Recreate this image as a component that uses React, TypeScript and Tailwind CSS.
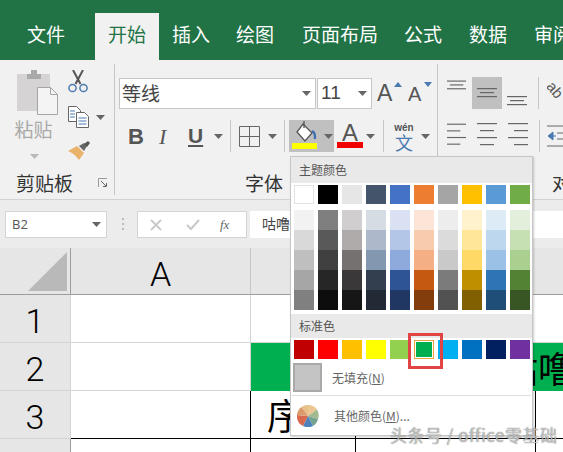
import React from "react";

const CJK = "font-['Noto_Sans_CJK_SC','Noto_Sans',sans-serif]";

const themeTop = ["#ffffff", "#000000", "#e7e6e6", "#44546a", "#4472c4", "#ed7d31", "#a5a5a5", "#ffc000", "#5b9bd5", "#70ad47"];
const shades = [
  ["#f2f2f2", "#d9d9d9", "#bfbfbf", "#a6a6a6", "#808080"],
  ["#7f7f7f", "#595959", "#404040", "#262626", "#0d0d0d"],
  ["#d0cece", "#afabab", "#767171", "#3a3838", "#171616"],
  ["#d6dce4", "#adb9ca", "#8497b0", "#333f4f", "#222b35"],
  ["#d9e1f2", "#b4c6e7", "#8ea9db", "#2f5496", "#203764"],
  ["#fce4d6", "#f8cbad", "#f4b084", "#c65911", "#833c0c"],
  ["#ededed", "#dbdbdb", "#c9c9c9", "#7b7b7b", "#525252"],
  ["#fff2cc", "#ffe699", "#ffd966", "#bf8f00", "#806000"],
  ["#ddebf7", "#bdd7ee", "#9bc2e6", "#2f75b5", "#1f4e78"],
  ["#e2efda", "#c6e0b4", "#a9d08e", "#548235", "#375623"],
];
const standard = ["#c00000", "#ff0000", "#ffc000", "#ffff00", "#92d050", "#00b050", "#00b0f0", "#0070c0", "#002060", "#7030a0"];

function Arrow({ className = "" }: { className?: string }) {
  return (
    <svg width="9" height="5" viewBox="0 0 9 5" className={className}>
      <path d="M0 0h9L4.500 5z" fill="#666" />
    </svg>
  );
}

function Lines({ rows }: { rows: [number, number][] }) {
  return (
    <svg width="20" height={rows.length * 7} viewBox={`0 0 20 ${rows.length * 7}`}>
      {rows.map(([a, b], i) => (
        <rect key={i} x={a} y={i * 7 + 1} width={b - a} height="1.200" fill="#666" />
      ))}
    </svg>
  );
}

function Sep() {
  return <div className="w-px h-[32px] bg-[#c6c6c6] shrink-0" />;
}

function Tab({ label, active, extra = "" }: { label: string; active?: boolean; extra?: string }) {
  return (
    <div
      className={`h-[47px] px-[13px] pt-[8px] text-[19px] leading-[26px] whitespace-nowrap shrink-0 ${extra} ${
        active ? "bg-[#f1f1f1] text-[#217346]" : "text-white"
      }`}
    >
      {label}
    </div>
  );
}

function PasteIcon() {
  return (
    <svg width="42" height="46" viewBox="0 0 42 46">
      <rect x="0" y="5" width="33" height="37" fill="#d6d3d5" />
      <path d="M10 5h4V1h6v4h4v5H10z" fill="#a9a9a9" />
      <path d="M20.500 18.500h13l7 7v20h-20z" fill="#f4f4f4" stroke="#a5a5a5" />
      <path d="M33.500 18.500v7h7" fill="none" stroke="#a5a5a5" />
    </svg>
  );
}

function ScissorsIcon() {
  return (
    <svg width="20" height="23" viewBox="0 0 20 23">
      <path d="M5 0l7.500 14M15 0L7.500 14" stroke="#555" strokeWidth="2" fill="none" />
      <circle cx="4.500" cy="18" r="3.600" fill="none" stroke="#4a7bb0" strokeWidth="1.500" />
      <circle cx="15.500" cy="18" r="3.600" fill="none" stroke="#4a7bb0" strokeWidth="1.500" />
    </svg>
  );
}

function CopyIcon() {
  return (
    <svg width="21" height="22" viewBox="0 0 21 22">
      <path d="M.5.500h8l4 4v11H.5z" fill="#fff" stroke="#666" />
      <path d="M8.500 6.500h8l4 4v11h-12z" fill="#fff" stroke="#666" />
      <path d="M2 5h5M2 8h5M2 11h5M10.500 12h8M10.500 15h8M10.500 18h8" stroke="#4a7bb0" />
    </svg>
  );
}

function BrushIcon() {
  return (
    <svg width="24" height="21" viewBox="0 0 24 21">
      <path d="M0 11l9-5 7 7-5 7c-3-4-6-7-11-9z" fill="#e9b36b" />
      <path d="M11 6l5-3 3 3-3 5z" fill="#666" />
      <path d="M16 4l4-3 2 2-3 4z" fill="#555" />
    </svg>
  );
}

function AlignGlyph({ y }: { y: number }) {
  return (
    <svg width="20" height="32" viewBox="0 0 20 32">
      <rect x="0" y={y} width="20" height="1.200" fill="#666" />
      <rect x="3" y={y + 4} width="14" height="1.200" fill="#666" />
      <rect x="0" y={y + 8} width="20" height="1.200" fill="#666" />
    </svg>
  );
}

function BucketIcon() {
  return (
    <svg width="26" height="30" viewBox="0 0 26 30">
      <path d="M11 3l9 9-7 8-8-9z" fill="#fff" stroke="#555" strokeWidth="1.300" />
      <path d="M12 0v7" stroke="#555" strokeWidth="1.300" />
      <path d="M20 10c3 1 3 4 3 8" stroke="#3f70b5" strokeWidth="2.200" fill="none" />
      <rect x="0" y="22" width="25" height="6" fill="#ffff00" />
    </svg>
  );
}

function PieIcon() {
  return (
    <svg width="22" height="22" viewBox="0 0 22 22">
      <path d="M11 11L4.500 2A11 11 0 0 1 11 0z" fill="#e9bf8a" />
      <path d="M11 11V0a11 11 0 0 1 9 4.500z" fill="#ecc794" />
      <path d="M11 11l9-6.500A11 11 0 0 1 21 14z" fill="#a3b98f" />
      <path d="M11 11l10 3a11 11 0 0 1-5 7z" fill="#76a38f" />
      <path d="M11 11l5 10a11 11 0 0 1-10 0z" fill="#4f81bd" />
      <path d="M11 11L6 21A11 11 0 0 1 0 10z" fill="#d8694f" />
      <path d="M11 11L0 10a11 11 0 0 1 4.500-8z" fill="#d99a6c" />
    </svg>
  );
}

function Swatch({ color, selected }: { color: string; selected?: boolean }) {
  return (
    <div
      className={`w-[20px] h-[19px] ${selected ? "border border-[#e8a33c] p-px bg-white" : color === "#ffffff" ? "border border-[#e2e2e2]" : ""}`}
    >
      <div className="w-full h-full" style={{ backgroundColor: color }} />
    </div>
  );
}

function ColorMenu() {
  return (
    <div className={`absolute left-[290px] top-[156px] w-[243px] h-[280px] bg-white border border-[#c6c6c6] shadow-[1px_1px_2px_rgba(0,0,0,0.2)] ${CJK}`}>
      <div className="h-[26px] bg-[#e9e9e9] pl-[8px] text-[12px] leading-[25px] text-[#555]">主题颜色</div>
      <div className="flex gap-[4px] pl-[3px] pt-[2px]">
        {themeTop.map((c) => (
          <Swatch key={c} color={c} />
        ))}
      </div>
      <div className="flex gap-[4px] pl-[3px] pt-[6px]">
        {shades.map((col, i) => (
          <div key={i} className="w-[20px] flex flex-col">
            {col.map((c) => (
              <div key={c} className="h-[20px] w-full" style={{ backgroundColor: c }} />
            ))}
          </div>
        ))}
      </div>
      <div className="mt-[4px] h-[24px] bg-[#e9e9e9] pl-[8px] text-[12px] leading-[24px] text-[#555]">标准色</div>
      <div className="flex gap-[4px] pl-[3px] pt-[2px]">
        {standard.map((c) => (
          <Swatch key={c} color={c} selected={c === "#00b050"} />
        ))}
      </div>
      <div className="flex items-center pl-[2px] pt-[3px] h-[34px]">
        <div className="w-[29px] h-[29px] bg-[#c4c4c4] border-2 border-[#a9a9a9] shrink-0" />
        <div className="ml-[10px] text-[12px] text-[#666]">
          无填充(<span className="underline">N</span>)
        </div>
      </div>
      <div className="mt-[2px] mx-[1px] h-px bg-[#dedede]" />
      <div className="flex items-center pl-[6px] h-[40px]">
        <PieIcon />
        <div className="ml-[15px] text-[12px] text-[#666]">
          其他颜色(<span className="underline">M</span>)...
        </div>
      </div>
    </div>
  );
}

function Ribbon() {
  return (
    <div className={`h-[139px] bg-[#f1f1f1] flex text-[#444] ${CJK}`}>
      {/* clipboard */}
      <div className="w-[115px] shrink-0 h-[131px] mt-[4px] border-r border-[#c6c6c6] flex flex-col">
        <div className="flex h-[107px]">
          <div className="w-[67px] shrink-0 flex flex-col items-center pl-[4px]">
            <div className="mt-[5px] ml-[4px]">
              <PasteIcon />
            </div>
            <div className="mt-[1px] text-[19px] leading-[26px] text-[#aaa] -ml-[4px]">粘贴</div>
            <Arrow className="mt-[12px] -ml-[2px] opacity-40" />
          </div>
          <div className="flex flex-col pl-[1px]">
            <div className="mt-[6px]">
              <ScissorsIcon />
            </div>
            <div className="mt-[13px] flex items-center">
              <CopyIcon />
              <Arrow className="ml-[7px]" />
            </div>
            <div className="mt-[12px]">
              <BrushIcon />
            </div>
          </div>
        </div>
        <div className="flex items-center pl-[16px] text-[19px] leading-[24px] text-[#333]">
          <span>剪贴板</span>
          <svg width="10" height="10" viewBox="0 0 10 10" className="ml-[25px]">
            <path d="M.5 9V.5H9" fill="none" stroke="#999" />
            <path d="M3 3l5 5M8.500 5v3.500H5" fill="none" stroke="#666" />
          </svg>
        </div>
      </div>

      {/* font */}
      <div className="w-[323px] shrink-0 h-[131px] mt-[4px] border-r border-[#c6c6c6] flex flex-col pl-[4px]">
        <div className="flex items-center mt-[13px] h-[32px]">
          <div className="w-[197px] h-[31px] bg-white border border-[#c6c6c6] flex items-center pl-[2px] pr-[4px] justify-between text-[19px] text-[#444]">
            <span>等线</span>
            <Arrow />
          </div>
          <div className="ml-px w-[55px] h-[31px] bg-white border border-[#c6c6c6] flex items-center pl-[3px] pr-[4px] justify-between text-[19px] text-[#444] font-['Liberation_Sans',sans-serif]">
            <span>11</span>
            <Arrow />
          </div>
          <div className="ml-[5px] relative w-[25px] h-[32px] text-[#555] text-[23px] font-['Liberation_Sans',sans-serif] leading-[32px]">
            A
            <svg width="8" height="5" viewBox="0 0 8 5" className="absolute right-0 top-[5px]">
              <path d="M0 5h8L4 0z" fill="#4a7bb0" />
            </svg>
          </div>
          <div className="ml-[6px] relative w-[24px] h-[32px] text-[#555] text-[20px] font-['Liberation_Sans',sans-serif] leading-[34px]">
            A
            <svg width="8" height="5" viewBox="0 0 8 5" className="absolute right-0 top-[5px]">
              <path d="M0 0h8L4 5z" fill="#4a7bb0" />
            </svg>
          </div>
        </div>
        <div className="flex items-center mt-[11px] h-[32px] font-['Liberation_Sans',sans-serif] text-[#555]">
          <div className="w-[35px] pl-[9px] text-[22px] font-bold">B</div>
          <div className="w-[30px] pl-[5px] text-[22px] italic font-['Liberation_Serif',serif]">I</div>
          <div className="w-[26px] pl-[4px] text-[21px] font-bold underline leading-[24px]">U</div>
          <Arrow className="ml-[4px] mr-[7px]" />
          <Sep />
          <svg width="21" height="21" viewBox="0 0 21 21" className="ml-[8px]">
            <path d="M.5.500h20v20H.5zM10.500.500v20M.5 10.500h20" fill="none" stroke="#666" />
          </svg>
          <Arrow className="ml-[8px] mr-[7px]" />
          <Sep />
          <div className="ml-[4px] w-[45px] h-[32px] bg-[#c0c0c0] flex items-center pl-[3px] shrink-0">
            <BucketIcon />
            <Arrow className="ml-[6px]" />
          </div>
          <div className="relative w-[26px] h-[32px] ml-[3px] text-[24px] leading-[26px] text-center">
            A
            <div className="absolute left-0 right-0 top-[22px] h-[6px] bg-[#f00000]" />
          </div>
          <Arrow className="ml-[3px] mr-[8px]" />
          <Sep />
          <div className={`ml-[9px] w-[22px] flex flex-col items-center ${CJK}`}>
            <span className="text-[10px] leading-[11px] font-['Liberation_Sans',sans-serif] font-bold text-[#555]">wén</span>
            <span className="text-[18px] leading-[18px] text-[#4a7bb0]">文</span>
          </div>
          <Arrow className="ml-[6px]" />
        </div>
        <div className="mt-[19px] pl-[126px] text-[19px] leading-[24px] text-[#333]">字体</div>
      </div>

      {/* alignment */}
      <div className="flex-1 flex flex-col pl-[9px] mt-[4px] min-w-0 overflow-hidden">
        <div className="flex items-center mt-[13px] h-[32px]">
          <AlignGlyph y={3} />
          <div className="ml-[6px] w-[31px] h-[32px] bg-[#c0c0c0] flex justify-center">
            <AlignGlyph y={11} />
          </div>
          <div className="ml-[5px]">
            <AlignGlyph y={19} />
          </div>
          <div className="ml-[11px]">
            <Sep />
          </div>
          <svg width="16" height="30" viewBox="0 0 16 30" className="ml-[8px] shrink-0">
            <text x="0" y="14" fontSize="15" fill="#555" transform="rotate(50 5 10)" fontFamily="Liberation Sans">ab</text>
          </svg>
        </div>
        <div className="flex items-center mt-[11px] h-[32px]">
          <Lines rows={[[0, 20], [0, 14], [0, 20], [0, 14]]} />
          <div className="ml-[11px]">
            <Lines rows={[[0, 20], [3, 17], [0, 20], [3, 17]]} />
          </div>
          <div className="ml-[11px]">
            <Lines rows={[[0, 20], [6, 20], [0, 20], [6, 20]]} />
          </div>
          <div className="ml-[11px]">
            <Sep />
          </div>
          <svg width="17" height="28" viewBox="0 0 17 28" className="ml-[6px] shrink-0">
            <path d="M7 10l-5 4 5 4zM3 14h7" fill="#4a7bb0" stroke="#4a7bb0" />
            <path d="M1 4h16M11 11h6M11 17h6M1 24h16" stroke="#666" />
          </svg>
        </div>
        <div className="mt-[19px] pl-[105px] text-[19px] leading-[24px] text-[#333] whitespace-nowrap">对齐</div>
      </div>
    </div>
  );
}

function FormulaBar() {
  return (
    <div className={`h-[49px] bg-[#ececec] border-t border-[#d2d2d2] flex items-start pt-[11px] pl-[5px] ${CJK}`}>
      <div className="w-[102px] h-[27px] bg-white border border-[#d4d4d4] flex items-center justify-between pl-[6px] pr-[5px] text-[13px] text-[#555] font-['Open_Sans',sans-serif] shrink-0">
        <span>B2</span>
        <Arrow />
      </div>
      <div className="ml-[15px] mt-[7px] flex flex-col gap-[3px] shrink-0">
        <div className="w-[2px] h-[2px] bg-[#bbb]" />
        <div className="w-[2px] h-[2px] bg-[#bbb]" />
        <div className="w-[2px] h-[2px] bg-[#bbb]" />
      </div>
      <div className="ml-[13px] w-[110px] h-[27px] bg-white border border-[#d4d4d4] flex items-center pl-[12px] shrink-0">
        <svg width="12" height="12" viewBox="0 0 12 12">
          <path d="M1 1l10 10M11 1L1 11" stroke="#c8c8c8" strokeWidth="1.800" />
        </svg>
        <svg width="14" height="12" viewBox="0 0 14 12" className="ml-[24px]">
          <path d="M1 6l4 4 8-9" stroke="#c8c8c8" strokeWidth="2" fill="none" />
        </svg>
        <span className="ml-[20px] text-[13px] italic font-['Liberation_Serif',serif] text-[#666]">fx</span>
      </div>
      <div className="ml-[3px] flex-1 h-[27px] bg-white pl-[12px] text-[14px] leading-[25px] text-[#444]">咕噜</div>
    </div>
  );
}

function Sheet() {
  const line = "border-b border-[#d4d4d4]";
  const head = "bg-[#e6e6e6] flex items-center justify-center text-[34px] font-['Roboto',sans-serif] font-light pt-[5px]";
  return (
    <div className={`grid grid-cols-[71px_180px_105px_180px_27px] grid-rows-[47px_48px_48px_48px_13px] text-black ${CJK}`}>
      <div className="bg-[#e6e6e6] border-r border-b border-[#9c9c9c] flex items-end justify-end pr-[3px] pb-[3px]">
        <div className="w-[39px] h-[39px] bg-[#b9b9b9] [clip-path:polygon(100%_0,100%_100%,0_100%)]" />
      </div>
      <div className={`${head} border-r border-b border-[#9c9c9c] border-r-[#c6c6c6] leading-none`}>A</div>
      <div className="col-span-3 bg-[#e6e6e6] border-b border-[#9c9c9c]" />

      <div className={`${head} border-r border-[#9c9c9c] ${line}`}>1</div>
      <div className={`border-r border-[#d4d4d4] ${line}`} />
      <div className={`col-span-3 ${line}`} />

      <div className={`${head} border-r border-[#9c9c9c] ${line}`}>2</div>
      <div className={`border-r border-[#d4d4d4] ${line}`} />
      <div className="col-span-3 bg-[#00b050] text-[36px] leading-[48px] overflow-hidden whitespace-nowrap pl-[251px]">咕噜</div>

      <div className={`${head} border-r border-[#9c9c9c] ${line}`}>3</div>
      <div className={`border-r border-black ${line}`} />
      <div className="border-b border-black border-r text-[36px] leading-[46px] pl-[16px]">序号</div>
      <div className="border-b border-black border-r" />
      <div className="border-b border-black" />

      <div className={`${head} border-r border-[#9c9c9c]`} />
      <div className="border-r border-black" />
      <div className="border-r border-black" />
      <div className="border-r border-black" />
      <div />
    </div>
  );
}

export default function App() {
  return (
    <div className="relative w-[563px] h-[452px] overflow-hidden bg-white">
      <div className={`h-[60px] bg-[#217346] flex items-end overflow-hidden ${CJK}`}>
        <Tab label="文件" extra="ml-[14px]" />
        <Tab label="开始" active extra="ml-[17px]" />
        <Tab label="插入" />
        <Tab label="绘图" />
        <Tab label="页面布局" extra="ml-[2px]" />
        <Tab label="公式" />
        <Tab label="数据" extra="ml-[1px]" />
        <Tab label="审阅" extra="ml-[1px]" />
      </div>
      <Ribbon />
      <FormulaBar />
      <Sheet />
      <ColorMenu />
      <div className="absolute left-[408px] top-[333px] w-[35px] h-[36px] border-[3px] border-[#e04444]" />
      <div className={`absolute left-[390px] top-[423px] text-[17px] leading-[24px] tracking-[0.5px] whitespace-nowrap text-[#ffffff99] [text-shadow:0_0_1px_#444] ${CJK}`}>
        头条号 / office零基础
      </div>
    </div>
  );
}
